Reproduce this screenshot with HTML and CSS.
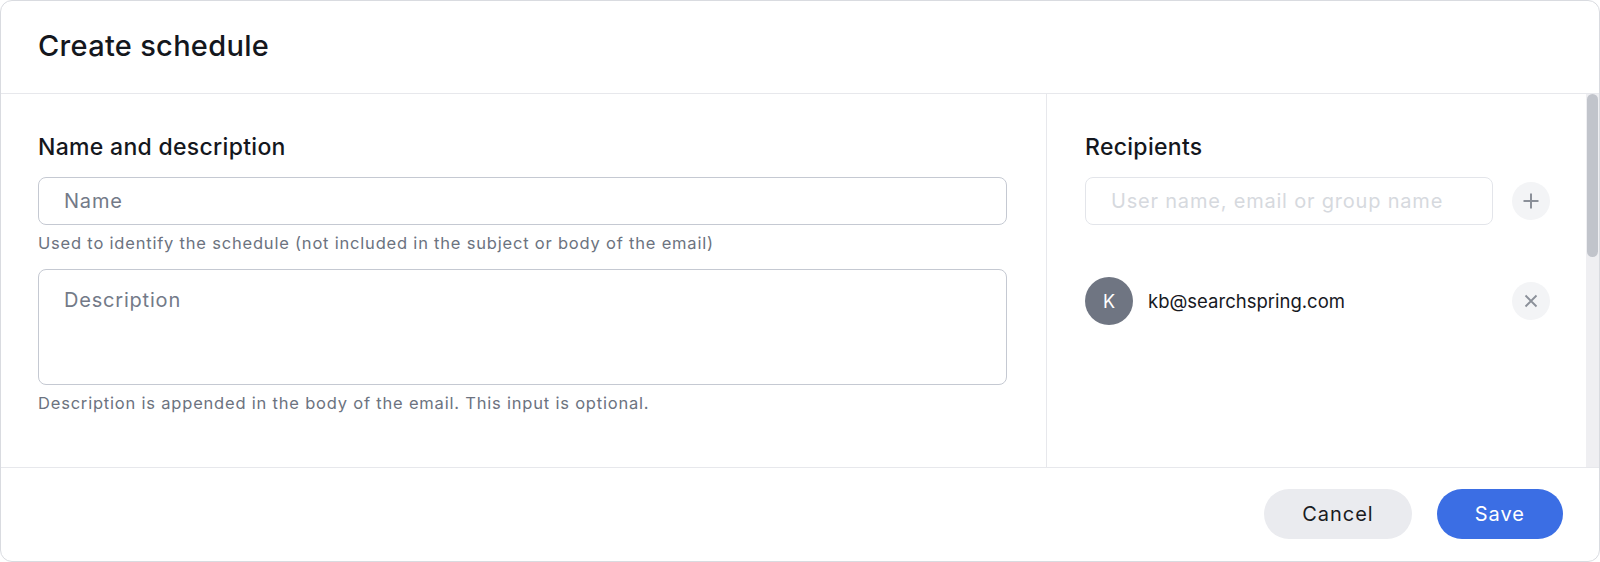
FILE: index.html
```html
<!DOCTYPE html>
<html lang="en">
<head>
    <meta charset="UTF-8">
    <meta name="viewport" content="width=device-width, initial-scale=1.0">
    <title>Create schedule</title>
    <link rel="stylesheet" href="styles.css">
</head>
<body>

<div class="modal">
    <div class="modal-header">
        <h1>Create schedule</h1>
    </div>

    <div class="modal-body">
        <div class="col-main">
            <h2>Name and description</h2>

            <input type="text" class="field" placeholder="Name">
            <p class="hint">Used to identify the schedule (not included in the subject or body of the email)</p>

            <textarea class="field field-area" placeholder="Description"></textarea>
            <p class="hint">Description is appended in the body of the email. This input is optional.</p>
        </div>

        <div class="col-side">
            <h2>Recipients</h2>

            <div class="add-row">
                <input type="text" class="field field-light" placeholder="User name, email or group name">
                <button class="round-btn" aria-label="Add">
                    <svg width="18" height="18" viewBox="0 0 18 18"><path d="M9 1.5v15M1.5 9h15" stroke="#8b9099" stroke-width="2" fill="none"/></svg>
                </button>
            </div>

            <div class="recipient">
                <div class="avatar">K</div>
                <span class="email">kb@searchspring.com</span>
                <button class="round-btn" aria-label="Remove">
                    <svg width="14" height="14" viewBox="0 0 14 14"><path d="M1.5 1.5l11 11M12.5 1.5l-11 11" stroke="#8b9099" stroke-width="1.8" fill="none"/></svg>
                </button>
            </div>
        </div>

        <div class="scrollbar">
            <div class="scroll-thumb"></div>
        </div>
    </div>

    <div class="modal-footer">
        <button class="btn btn-secondary">Cancel</button>
        <button class="btn btn-primary">Save</button>
    </div>
</div>

</body>
</html>
```

FILE: styles.css
```css
* {
    box-sizing: border-box;
}

body {
    margin: 0;
    background-color: #ffffff;
    font-family: Inter, "Noto Sans", sans-serif;
    color: #14171d;
}

.modal {
    height: 100vh;
    display: flex;
    flex-direction: column;
    border: 1px solid #d9dbe0;
    border-radius: 12px;
    overflow: hidden;
    background-color: #fff;
}

.modal-header {
    height: 93px;
    flex-shrink: 0;
    display: flex;
    align-items: center;
    padding: 0 37px;
    border-bottom: 1px solid #e7e8ec;
}

h1 {
    margin: 0 0 2px;
    font-size: 29px;
    font-weight: 500;
    line-height: 34px;
    letter-spacing: 0.3px;
}

h2 {
    margin: 0 0 16px;
    font-size: 23px;
    font-weight: 500;
    line-height: 28px;
    letter-spacing: 0.3px;
}

.modal-body {
    flex: 1;
    display: flex;
    min-height: 0;
}

.col-main {
    width: 1046px;
    padding: 39px 39px 0 37px;
    border-right: 1px solid #e7e8ec;
}

.col-side {
    flex: 1;
    padding: 39px 36px 0 38px;
}

.field {
    display: block;
    width: 100%;
    height: 48px;
    padding: 0 25px;
    border: 1px solid #c5c9d2;
    border-radius: 8px;
    font-family: inherit;
    font-size: 20px;
    line-height: 24px;
    letter-spacing: 0.8px;
    color: #14171d;
    background: #fff;
    outline: none;
}

.field::placeholder {
    color: #737a88;
}

.field-area {
    height: 116px;
    padding-top: 18px;
    resize: none;
}

.field-light {
    flex: 1;
    border-color: #e3e5ea;
}

.field-light::placeholder {
    color: #d6d9de;
}

.hint {
    margin: 8px 0 16px;
    font-size: 16.5px;
    line-height: 20px;
    letter-spacing: 0.8px;
    color: #6c7380;
}

.add-row {
    display: flex;
    align-items: center;
    gap: 19px;
}

.round-btn {
    width: 38px;
    height: 38px;
    flex-shrink: 0;
    border: none;
    border-radius: 50%;
    background-color: #f3f4f6;
    display: flex;
    align-items: center;
    justify-content: center;
    padding: 0;
}

.recipient {
    display: flex;
    align-items: center;
    margin-top: 52px;
}

.avatar {
    width: 48px;
    height: 48px;
    border-radius: 50%;
    background-color: #6f7582;
    color: #fff;
    font-size: 18px;
    display: flex;
    align-items: center;
    justify-content: center;
}

.email {
    flex: 1;
    margin-left: 15px;
    font-size: 18.5px;
    color: #17191f;
}

.scrollbar {
    width: 13px;
    background-color: #efeff2;
    padding: 0 1px;
}

.scroll-thumb {
    height: 163px;
    border-radius: 6px;
    background-color: #c1c4cb;
}

.modal-footer {
    height: 94px;
    flex-shrink: 0;
    display: flex;
    align-items: center;
    justify-content: flex-end;
    gap: 25px;
    padding: 0 36px 1px;
    border-top: 1px solid #e7e8ec;
}

.btn {
    height: 50px;
    padding: 0 38px;
    border: none;
    border-radius: 25px;
    font-family: inherit;
    font-size: 20px;
    letter-spacing: 1px;
}

.btn-secondary {
    background-color: #eaebef;
    color: #1a1c22;
}

.btn-primary {
    background-color: #3b6ee4;
    color: #fff;
}
```
